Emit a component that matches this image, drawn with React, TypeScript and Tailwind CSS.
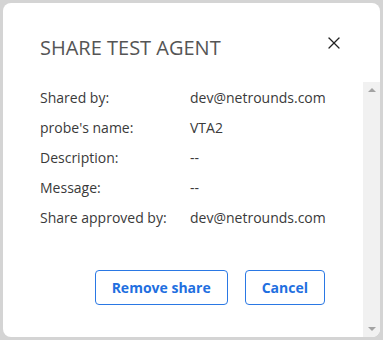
import { X } from "lucide-react";

const rows: [string, string][] = [
  ["Shared by:", "dev@netrounds.com"],
  ["probe's name:", "VTA2"],
  ["Description:", "--"],
  ["Message:", "--"],
  ["Share approved by:", "dev@netrounds.com"],
];

export default function App() {
  return (
    <div className="w-[383px] h-[340px] bg-[#d4d4d4] p-[3px]" style={{ fontFamily: '"Open Sans", sans-serif' }}>
      <div className="h-full bg-white rounded-[8px] overflow-hidden flex flex-col">
        {/* header */}
        <div className="flex items-start justify-between pl-[37px] pr-[36px] pt-[31px] h-[79px] shrink-0">
          <h2 className="text-[20px] leading-[28px] text-[#555]">SHARE TEST AGENT</h2>
          <button className="-mt-[1px] text-[#222]">
            <X size={20} strokeWidth={1.5} />
          </button>
        </div>

        {/* body */}
        <div className="flex flex-1 min-h-0">
          <div className="flex-1 pl-[37px]">
            {rows.map(([label, value]) => (
              <div key={label} className="flex h-[30px] items-center text-[14px] text-[#3a3a3a]">
                <span className="w-[150px]">{label}</span>
                <span>{value}</span>
              </div>
            ))}
            <div className="flex justify-end gap-[17px] mt-[38px] pr-[38px]">
              <button className="h-[35px] px-[16px] border border-[#2a78e4] rounded-[4px] text-[14px] font-bold text-[#1f6fe0]">
                Remove share
              </button>
              <button className="h-[35px] px-[16px] border border-[#2a78e4] rounded-[4px] text-[14px] font-bold text-[#1f6fe0]">
                Cancel
              </button>
            </div>
          </div>
          <div className="w-[17px] bg-[#f1f1f1] flex flex-col justify-between items-center py-[6px]">
            <div className="w-0 h-0 border-l-[4px] border-r-[4px] border-b-[4px] border-l-transparent border-r-transparent border-b-[#a3a3a3]" />
            <div className="w-0 h-0 border-l-[4px] border-r-[4px] border-t-[4px] border-l-transparent border-r-transparent border-t-[#a3a3a3]" />
          </div>
        </div>
      </div>
    </div>
  );
}
